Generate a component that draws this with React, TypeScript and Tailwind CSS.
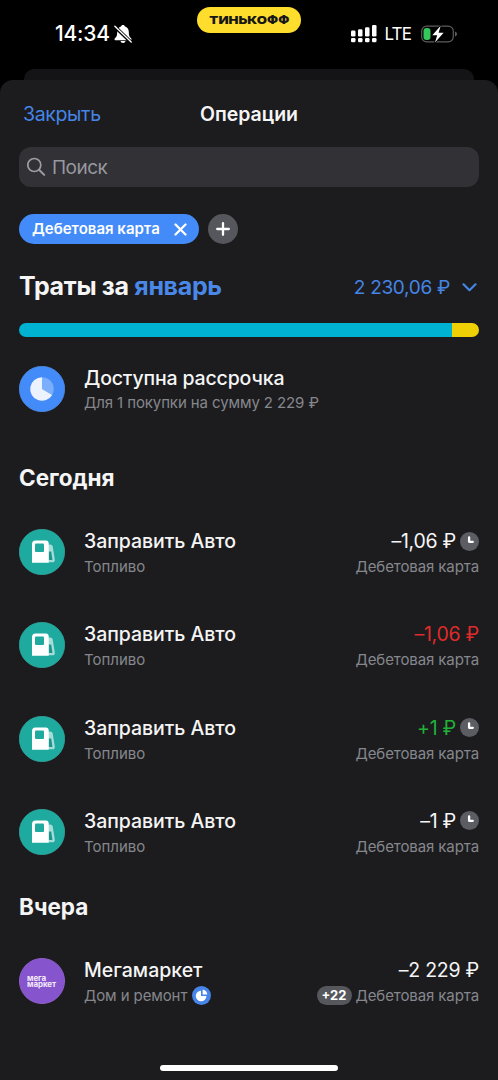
import React from "react";

interface Operation {
  id: number;
  title: string;
  category: string;
  amount: string;
  amountClass: string;
  pending: boolean;
}

const todayOperations: Operation[] = [
  { id: 1, title: "Заправить Авто", category: "Топливо", amount: "–1,06 ₽", amountClass: "text-[#f5f5f6]", pending: true },
  { id: 2, title: "Заправить Авто", category: "Топливо", amount: "–1,06 ₽", amountClass: "text-[#df2b2b]", pending: false },
  { id: 3, title: "Заправить Авто", category: "Топливо", amount: "+1 ₽", amountClass: "text-[#21b038]", pending: true },
  { id: 4, title: "Заправить Авто", category: "Топливо", amount: "–1 ₽", amountClass: "text-[#f5f5f6]", pending: true },
];

const BellOffIcon = () => (
  <svg width="18" height="20" viewBox="0 0 18 20" fill="none">
    <path d="M9 1c-1.100 0-1.800.6-2 1.500C4.600 3.300 3.200 5.300 3.200 8c0 3.700-.6 4.600-1.800 5.800-.6.600-.9 1-.9 1.500 0 .600.500 1 1.100 1h14.800c.600 0 1.100-.4 1.100-1 0-.500-.3-.900-.9-1.500C15.400 12.600 14.800 11.700 14.800 8c0-2.700-1.400-4.700-3.800-5.500C10.800 1.600 10.100 1 9 1Z" fill="#fff" />
    <path d="M6.500 17.100h5c-.2 1.200-1.200 1.900-2.500 1.900s-2.300-.7-2.500-1.900Z" fill="#fff" />
    <path d="M.5 2.300 17.300 18.500" stroke="#000" strokeWidth="3.400" />
    <path d="M.9 2.300 17.200 18" stroke="#fff" strokeWidth="1.400" strokeLinecap="round" />
  </svg>
);

const SignalIcon = () => (
  <svg width="26" height="18" viewBox="0 0 26 18" fill="#fff">
    <rect x="0" y="5.500" width="4.500" height="6" rx="1.300" />
    <rect x="7" y="4.200" width="4.500" height="7.300" rx="1.300" />
    <rect x="14" y="2.300" width="4.500" height="9.200" rx="1.300" />
    <rect x="21" y="0" width="4.500" height="11.500" rx="1.300" />
    <rect x="0" y="13" width="4.500" height="4.200" rx="1.300" />
    <rect x="7" y="13" width="4.500" height="4.200" rx="1.300" />
    <rect x="14" y="13" width="4.500" height="4.200" rx="1.300" />
    <rect x="21" y="13" width="4.500" height="4.200" rx="1.300" />
  </svg>
);

const BatteryIcon = () => (
  <svg width="37" height="19" viewBox="0 0 37 19" fill="none">
    <rect x=".7" y="1.200" width="31.600" height="15.600" rx="5" stroke="#5d5d5f" strokeWidth="1.200" />
    <path d="M34 6.500v5c1.200-.400 2-1.300 2-2.500S35.200 6.900 34 6.500Z" fill="#5d5d5f" />
    <rect x="2.500" y="3" width="7" height="12" rx="3" fill="#34c759" />
    <path d="M19.700.8 11.300 10.200h4.900L14 17.500l8.600-9.800h-5L19.700.8Z" fill="#fff" stroke="#000" strokeWidth="1.600" paintOrder="stroke" strokeLinejoin="round" />
  </svg>
);

const FuelIcon = () => (
  <svg width="46" height="46" viewBox="0 0 46 46" fill="none">
    <circle cx="23" cy="23" r="22.700" fill="#1eaa9f" stroke="#36b3a9" strokeWidth=".6" />
    <path d="M28 15.500h3.200c1.300 0 2.100.7 2.500 1.900l2.100 13c.3 1.700-.6 2.900-2.200 2.900H28V15.500Z" fill="#fff" fillOpacity=".6" />
    <path d="M29.700 22.500h2.500l1.300 8.500h-3.800v-8.500Z" fill="#1e948d" />
    <path d="M16.300 11.500h10.600c1.700 0 2.800 1.100 2.800 2.800v19.500H13V14.800c0-2 1.300-3.300 3.300-3.300Z" fill="#fff" />
    <rect x="16" y="14.500" width="9" height="8.500" rx="1" fill="#1eaa9f" />
  </svg>
);

const PieIcon = () => (
  <svg width="46" height="46" viewBox="0 0 46 46" fill="none">
    <circle cx="23" cy="23" r="22.700" fill="#428bf9" stroke="#5898f6" strokeWidth=".6" />
    <path d="M23 23V11.200a11.800 11.800 0 0 1 10.200 17.700L23 23Z" fill="#fff" fillOpacity=".3" />
    <path d="M23 23V11.200a11.800 11.800 0 1 0 10.200 17.700L23 23Z" fill="#edf3fe" />
  </svg>
);

const ClockIcon = () => (
  <svg width="19" height="19" viewBox="0 0 19 19" fill="none">
    <circle cx="9.500" cy="9.500" r="9.500" fill="#5b5d63" />
    <path d="M9.100 5.300v4.500h3.700" stroke="#fff" strokeWidth="2.300" strokeLinecap="round" strokeLinejoin="round" />
  </svg>
);

const InstallmentIcon = () => (
  <svg width="19" height="19" viewBox="0 0 19 19" fill="none">
    <circle cx="9.500" cy="9.500" r="9.500" fill="#4785e8" />
    <path d="M9 4.700v5.300h5.400A5.300 5.300 0 1 1 9 4.700Z" fill="#fff" />
    <path d="M10.600 3.800a4.600 4.600 0 0 1 4.600 4.600h-4.600V3.800Z" fill="#fff" />
  </svg>
);

const OperationRow: React.FC<{ operation: Operation }> = ({ operation }) => (
  <div className="flex h-[46px] items-start">
    <FuelIcon />
    <div className="ml-[19px] flex-1">
      <div className="text-[19.5px] leading-6 font-medium tracking-[-0.05px]">{operation.title}</div>
      <div className="mt-1 text-[15px] leading-5 text-[#85878d]">{operation.category}</div>
    </div>
    <div className="flex flex-col items-end">
      <div className="flex items-center gap-1">
        <span className={`text-[19.5px] leading-6 tracking-[-0.25px] ${operation.amountClass}`}>{operation.amount}</span>
        {operation.pending && <ClockIcon />}
      </div>
      <div className="mt-1 text-[15px] leading-5 tracking-[-0.1px] text-[#85878d]">Дебетовая карта</div>
    </div>
  </div>
);

export default function App() {
  return (
    <div className="relative flex h-[1080px] w-[498px] flex-col overflow-hidden bg-black font-['Inter',sans-serif] whitespace-nowrap text-[#f5f5f6]">
      {/* Status bar */}
      <div className="relative flex h-[69px] flex-none items-start">
        <div className="mt-[22px] ml-[55px] flex w-[77px] items-center justify-between">
          <span className="text-[21px] leading-6 font-medium tracking-[-0.2px] text-white">14:34</span>
          <BellOffIcon />
        </div>
        <div className="mt-[22px] mr-[40px] ml-auto flex h-6 items-center">
          <SignalIcon />
          <span className="mr-[10px] ml-[8px] text-[17px] leading-6 tracking-[-0.9px] text-white">LTE</span>
          <BatteryIcon />
        </div>
        <div className="absolute top-[7px] left-[197px] flex h-[26px] w-[104px] items-center justify-center rounded-full bg-[#ffdd2d]">
          <span className="scale-x-[1.2] text-[11px] font-black text-[#171717]">ТИНЬКОФФ</span>
        </div>
      </div>

      {/* Sheet behind the current one */}
      <div className="mx-6 h-[11px] flex-none rounded-t-[10px] bg-[#141416]" />

      <div className="flex flex-1 flex-col rounded-t-[13px] bg-[#1c1c1e] px-[19px]">
        {/* Header */}
        <div className="grid h-[67px] flex-none grid-cols-3 items-center pt-[2px]">
          <span className="pl-1 text-[19.5px] tracking-[-0.35px] text-[#4585e6]">Закрыть</span>
          <span className="text-center text-[19.5px] font-semibold">Операции</span>
        </div>

        {/* Search */}
        <div className="flex h-10 flex-none items-center rounded-[12px] bg-[#313136] pl-2">
          <svg width="20" height="20" viewBox="0 0 20 20" fill="none" stroke="#9c9ca2" strokeWidth="1.700" strokeLinecap="round">
            <circle cx="7.300" cy="8" r="6.500" />
            <path d="m12.300 13 4.900 4.900" strokeWidth="2" />
          </svg>
          <span className="mt-[2px] ml-[5px] text-[19px] tracking-[-0.5px] text-[#98989f]">Поиск</span>
        </div>

        {/* Filters */}
        <div className="mt-[27px] flex h-[30px] flex-none items-center gap-[9px]">
          <div className="flex h-[30px] w-[180px] items-center justify-between rounded-full bg-[#428bf9] pr-3 pl-[13px] text-white">
            <span className="mt-px text-[15px] font-semibold">Дебетовая карта</span>
            <svg width="13" height="13" viewBox="0 0 13 13" stroke="#fff" strokeWidth="2.300" strokeLinecap="round">
              <path d="m1.500 1.500 10 10M11.500 1.500l-10 10" />
            </svg>
          </div>
          <div className="flex h-[30px] w-[30px] items-center justify-center rounded-full bg-[#55575c]">
            <svg width="14" height="14" viewBox="0 0 14 14" stroke="#fff" strokeWidth="2.300" strokeLinecap="round">
              <path d="M7 1.200v11.600M1.200 7h11.600" />
            </svg>
          </div>
        </div>

        {/* Spendings */}
        <div className="mt-[23px] flex h-10 flex-none items-center">
          <h1 className="text-[25px] font-bold tracking-[-0.33px]">
            Траты за <span className="text-[#4a88e8]">январь</span>
          </h1>
          <span className="mt-[2px] ml-auto text-[19px] tracking-[-0.3px] text-[#4585e6]">2 230,06 ₽</span>
          <svg className="mr-[2px] ml-[12px]" width="15" height="9" viewBox="0 0 15 9" fill="none" stroke="#4585e6" strokeWidth="2.200" strokeLinecap="round" strokeLinejoin="round">
            <path d="m1.500 1.300 6 5.900 6-5.900" />
          </svg>
        </div>
        <div className="mt-4 flex h-[14px] flex-none overflow-hidden rounded-full">
          <div className="flex-1 bg-[#00b2d2]" />
          <div className="w-[27px] bg-[#efd005]" />
        </div>

        {/* Installment offer */}
        <div className="mt-[29px] flex h-[46px] flex-none items-start">
          <PieIcon />
          <div className="ml-[19px]">
            <div className="text-[19.5px] leading-6 font-medium tracking-[-0.15px]">Доступна рассрочка</div>
            <div className="mt-[3px] text-[15px] leading-5 tracking-[-0.1px] text-[#85878d]">Для 1 покупки на сумму 2 229 ₽</div>
          </div>
        </div>

        <h2 className="mt-[51px] text-[22.5px] leading-[30px] font-bold">Сегодня</h2>
        <div className="mt-9 flex flex-col gap-[47.300px]">
          {todayOperations.map((operation) => (
            <OperationRow key={operation.id} operation={operation} />
          ))}
        </div>

        <h2 className="mt-[37px] text-[22.5px] leading-[30px] font-bold">Вчера</h2>
        <div className="mt-9 flex h-[46px] items-start">
          <div className="flex h-[46px] w-[46px] items-center rounded-full border border-[#915fd0] bg-[#8654cc] pl-[7px] text-[8px] leading-[6px] font-bold tracking-[-0.1px] text-[#f3e9fa]">
            <span>
              мега
              <br />
              маркет
            </span>
          </div>
          <div className="ml-[19px] flex-1">
            <div className="text-[19.5px] leading-6 font-medium">Мегамаркет</div>
            <div className="mt-1 flex items-center gap-[5px] text-[15px] leading-5 tracking-[-0.1px] text-[#85878d]">
              Дом и ремонт
              <InstallmentIcon />
            </div>
          </div>
          <div className="flex flex-col items-end">
            <span className="text-[19.5px] leading-6 tracking-[-0.25px]">–2 229 ₽</span>
            <div className="mt-1 flex items-center gap-1">
              <span className="flex h-[19px] w-[35px] items-center justify-center rounded-full bg-[#55575c] text-[13px] font-bold text-white">+22</span>
              <span className="text-[15px] leading-5 tracking-[-0.1px] text-[#85878d]">Дебетовая карта</span>
            </div>
          </div>
        </div>

        {/* Home indicator */}
        <div className="mt-auto mb-[9px] h-[6px] w-[178px] flex-none self-center rounded-full bg-white" />
      </div>
    </div>
  );
}
